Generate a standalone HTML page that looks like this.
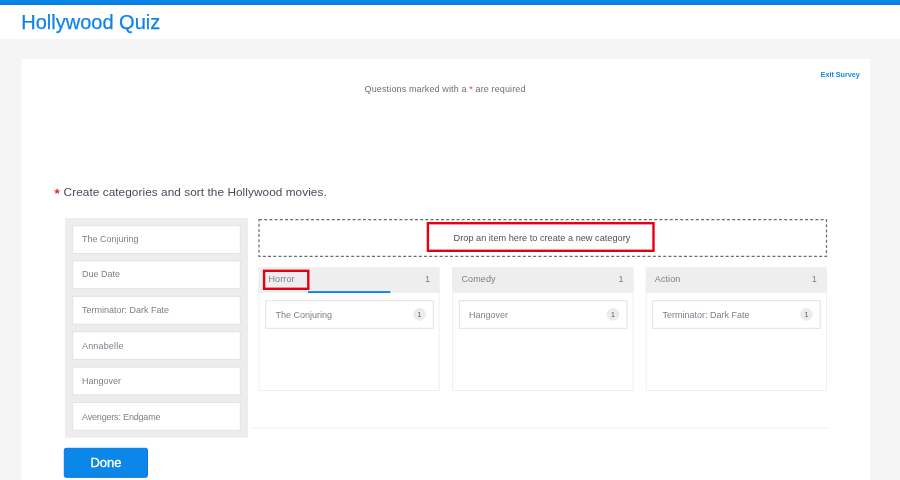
<!DOCTYPE html>
<html><head><meta charset="utf-8"><title>Hollywood Quiz</title>
<style>
*{box-sizing:border-box;margin:0;padding:0}
html,body{width:900px;height:480px;overflow:hidden;background:#f5f5f5;font-family:"Liberation Sans",sans-serif;}
.abs{position:absolute}
#shapes{left:0;top:0;width:900px;height:480px}
#txt{left:0;top:0;width:900px;height:480px;will-change:transform}
.t{position:absolute;white-space:nowrap;line-height:12px;font-size:9px;color:#7b808a;letter-spacing:.0px}
#title{left:21.3px;top:9px;font-size:20px;color:#0e84e8;line-height:26px;letter-spacing:0;-webkit-text-stroke:.25px #0e84e8}
#exit{left:820.6px;top:70px;font-size:7.2px;color:#1688e8;font-weight:bold;line-height:10px;letter-spacing:0}
#req{left:364.6px;top:83px;color:#707070;letter-spacing:.13px}
#req span{color:#f0413c}
#q{left:63.6px;top:183.7px;font-size:11.8px;color:#454c5a;line-height:16px;letter-spacing:.06px}
#star{left:54.4px;top:187.2px;font-size:13.5px;color:#e5202a;font-weight:bold;line-height:14px;letter-spacing:0}
#droptxt{left:453.6px;top:231.7px;font-size:9.2px;color:#4a5160;letter-spacing:0}
.badge{position:absolute;width:13px;height:13px;color:#555;font-size:7px;line-height:13px;text-align:center;letter-spacing:0}
#done{left:64px;top:448px;width:84px;height:30px;color:#fff;font-size:13px;text-align:center;line-height:30px;letter-spacing:0;-webkit-text-stroke:.3px #fff}
</style></head><body>
<svg id="shapes" class="abs" width="900" height="480" viewBox="0 0 900 480">
<rect x="0" y="0" width="900" height="480" fill="#f5f5f5"/>
<rect x="0" y="5" width="900" height="34" fill="#fff"/>
<rect x="0" y="0" width="900" height="4.9" fill="#0b84e8"/>
<rect x="0" y="3.9" width="900" height="1" fill="#0875e0"/>
<rect x="21.4" y="59" width="848.7" height="430" fill="#fff"/>
<!-- left panel -->
<rect x="65" y="218" width="183" height="219.6" fill="#ededed"/>
<g fill="#fff" stroke="#e2e2e2" stroke-width="1">
<rect x="72.7" y="225.7" width="167.6" height="27.8"/>
<rect x="72.7" y="260.9" width="167.6" height="27.8"/>
<rect x="72.7" y="296.3" width="167.6" height="27.8"/>
<rect x="72.7" y="331.7" width="167.6" height="27.8"/>
<rect x="72.7" y="367.1" width="167.6" height="27.8"/>
<rect x="72.7" y="402.5" width="167.6" height="27.8"/>
</g>
<!-- drop zone -->
<rect x="259" y="219.7" width="567.5" height="36.6" fill="none" stroke="#6c6c6c" stroke-width="1.2" stroke-dasharray="3 2.2"/>
<rect x="427.9" y="223.2" width="225.6" height="27.6" fill="none" stroke="#e60012" stroke-width="2.4"/>
<!-- categories -->
<g fill="#fff" stroke="#f0f0f0" stroke-width="1">
<rect x="259" y="280" width="180.2" height="110.5"/>
<rect x="452.5" y="280" width="180.7" height="110.5"/>
<rect x="646.2" y="280" width="180.3" height="110.5"/>
</g>
<g fill="#eeeeee">
<rect x="258.6" y="267.2" width="181" height="25.6"/>
<rect x="452" y="267.2" width="181.6" height="25.6"/>
<rect x="645.7" y="267.2" width="181.2" height="25.6"/>
</g>
<g fill="#fff" stroke="#e2e2e2" stroke-width="1">
<rect x="265.7" y="300.7" width="167.6" height="27.6"/>
<rect x="459.3" y="300.7" width="167.6" height="27.6"/>
<rect x="652.6" y="300.7" width="167.6" height="27.6"/>
</g>
<g fill="#ebebeb">
<circle cx="419.5" cy="314.4" r="6.3"/>
<circle cx="613" cy="314.4" r="6.3"/>
<circle cx="806.5" cy="314.4" r="6.3"/>
</g>
<rect x="308" y="291.1" width="82.4" height="1.9" fill="#0e84e8"/>
<rect x="264.1" y="270.8" width="44.2" height="18" fill="none" stroke="#e60012" stroke-width="2.4"/>
<rect x="251" y="427.6" width="577" height="1" fill="#f1f1f1"/>
<rect x="64.3" y="448.3" width="83.2" height="29" rx="1.8" fill="#0b86e9" stroke="#0875e0" stroke-width="1"/>
</svg>
<div id="txt" class="abs">
<div class="t" id="title">Hollywood Quiz</div>
<div class="t" id="exit">Exit Survey</div>
<div class="t" id="req">Questions marked with a <span>*</span> are required</div>
<div class="t" id="star">*</div>
<div class="t" id="q">Create categories and sort the Hollywood movies.</div>
<div class="t li" style="left:82px;top:233px">The Conjuring</div>
<div class="t li" style="left:82px;top:268.4px">Due Date</div>
<div class="t li" style="left:82px;top:304.1px">Terminator: Dark Fate</div>
<div class="t li" style="left:82px;top:339.8px;letter-spacing:.17px">Annabelle</div>
<div class="t li" style="left:82px;top:374.9px">Hangover</div>
<div class="t li" style="left:82px;top:410.8px;letter-spacing:-.18px">Avengers: Endgame</div>
<div class="t" id="droptxt">Drop an item here to create a new category</div>
<div class="t" style="left:268.5px;top:273px;letter-spacing:.1px">Horror</div>
<div class="t" style="left:425px;top:273px;letter-spacing:.1px">1</div>
<div class="t" style="left:461.5px;top:273px;letter-spacing:.1px">Comedy</div>
<div class="t" style="left:618.4px;top:273px;letter-spacing:.1px">1</div>
<div class="t" style="left:654.8px;top:273px;letter-spacing:.1px">Action</div>
<div class="t" style="left:811.7px;top:273px;letter-spacing:.1px">1</div>
<div class="t" style="left:275.5px;top:308.9px">The Conjuring</div>
<div class="t" style="left:469px;top:308.9px">Hangover</div>
<div class="t" style="left:662.5px;top:308.9px">Terminator: Dark Fate</div>
<div class="badge" style="left:413px;top:308px">1</div>
<div class="badge" style="left:606.5px;top:308px">1</div>
<div class="badge" style="left:800px;top:308px">1</div>
<div class="abs" id="done">Done</div>
</div>
</body></html>
